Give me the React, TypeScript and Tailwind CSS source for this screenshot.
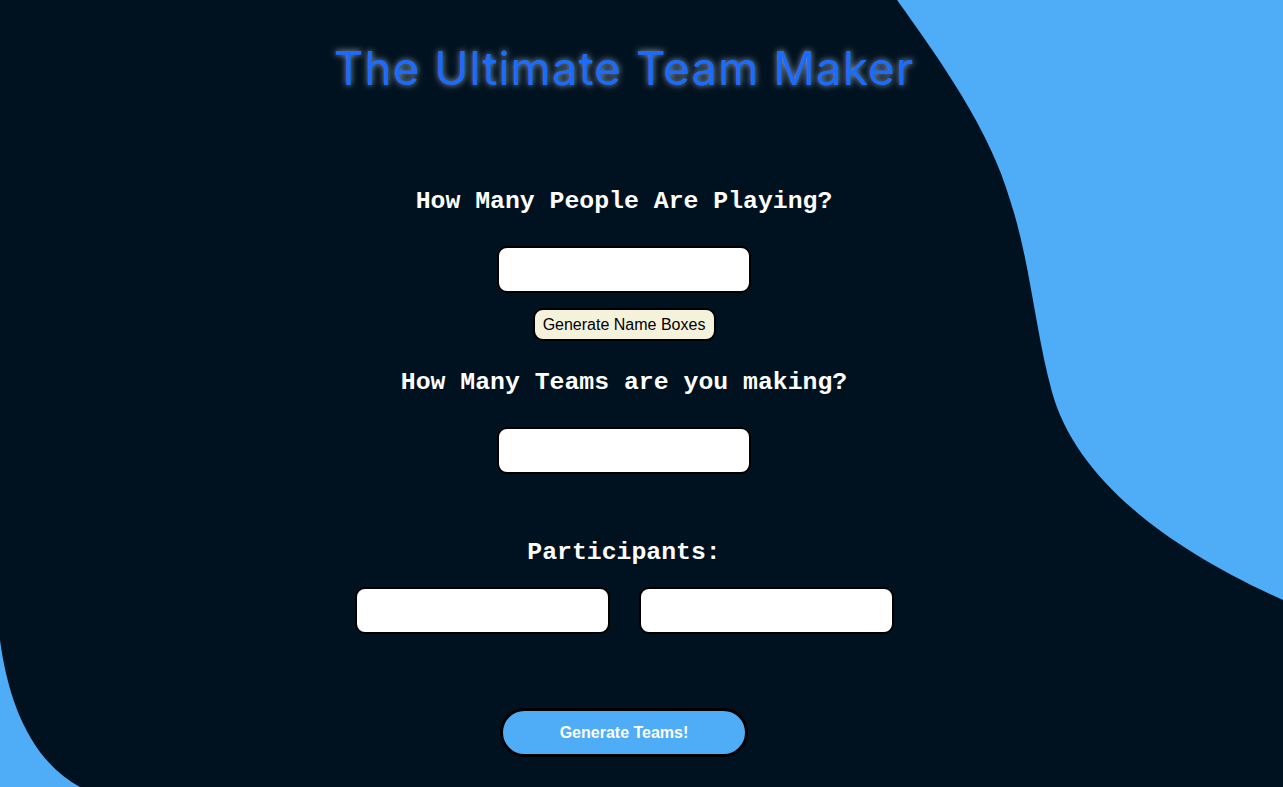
export default function App() {
  return (
    <div className="relative min-h-[787px] overflow-hidden bg-[#001220]">
      <svg
        className="absolute inset-0 h-[787px] w-[1283px]"
        viewBox="0 0 1283 787"
        preserveAspectRatio="none"
      >
        <path
          d="M897 0 C 940 60, 990 130, 1010 200 C 1030 260, 1035 330, 1052 392 C 1075 475, 1160 545, 1283 600 L 1283 0 Z"
          fill="#4facf7"
        />
        <path d="M0 640 C 8 700, 30 760, 80 787 L 0 787 Z" fill="#4facf7" />
      </svg>

      <main className="relative flex flex-col items-center pr-[35px]">
        <h1 className="mt-[39px] text-[46px] leading-[58px] font-normal tracking-[1px] text-[#1a6cff] [font-family:Inter,'Noto_Sans',sans-serif] [text-shadow:0_0_6px_#9aa3ad]">
          The Ultimate Team Maker
        </h1>

        <h2 className="mt-[89px] text-[24.8px] leading-[30px] font-bold text-white [font-family:'Liberation_Mono',monospace]">
          How Many People Are Playing?
        </h2>
        <input className="mt-[30px] h-[47px] w-[254px] rounded-[10px] border-2 border-black bg-white" />
        <button className="mt-[15px] h-[33px] w-[183px] rounded-[10px] border-2 border-black bg-[#f5f2dc] text-[16px] text-black [font-family:'Liberation_Sans',Arial,sans-serif]">
          Generate Name Boxes
        </button>

        <h2 className="mt-[26px] text-[24.8px] leading-[30px] font-bold text-white [font-family:'Liberation_Mono',monospace]">
          How Many Teams are you making?
        </h2>
        <input className="mt-[30px] h-[47px] w-[254px] rounded-[10px] border-2 border-black bg-white" />

        <h2 className="mt-[63px] text-[24.8px] leading-[30px] font-bold text-white [font-family:'Liberation_Mono',monospace]">
          Participants:
        </h2>
        <div className="mt-[20px] flex gap-[29px]">
          <input className="h-[47px] w-[255px] rounded-[10px] border-2 border-black bg-white" />
          <input className="h-[47px] w-[255px] rounded-[10px] border-2 border-black bg-white" />
        </div>

        <button className="mt-[74px] h-[49px] w-[248px] rounded-full border-[3px] border-black bg-[#4facf7] text-[16px] font-bold text-white [font-family:'Liberation_Sans',Arial,sans-serif]">
          Generate Teams!
        </button>
      </main>
    </div>
  );
}
